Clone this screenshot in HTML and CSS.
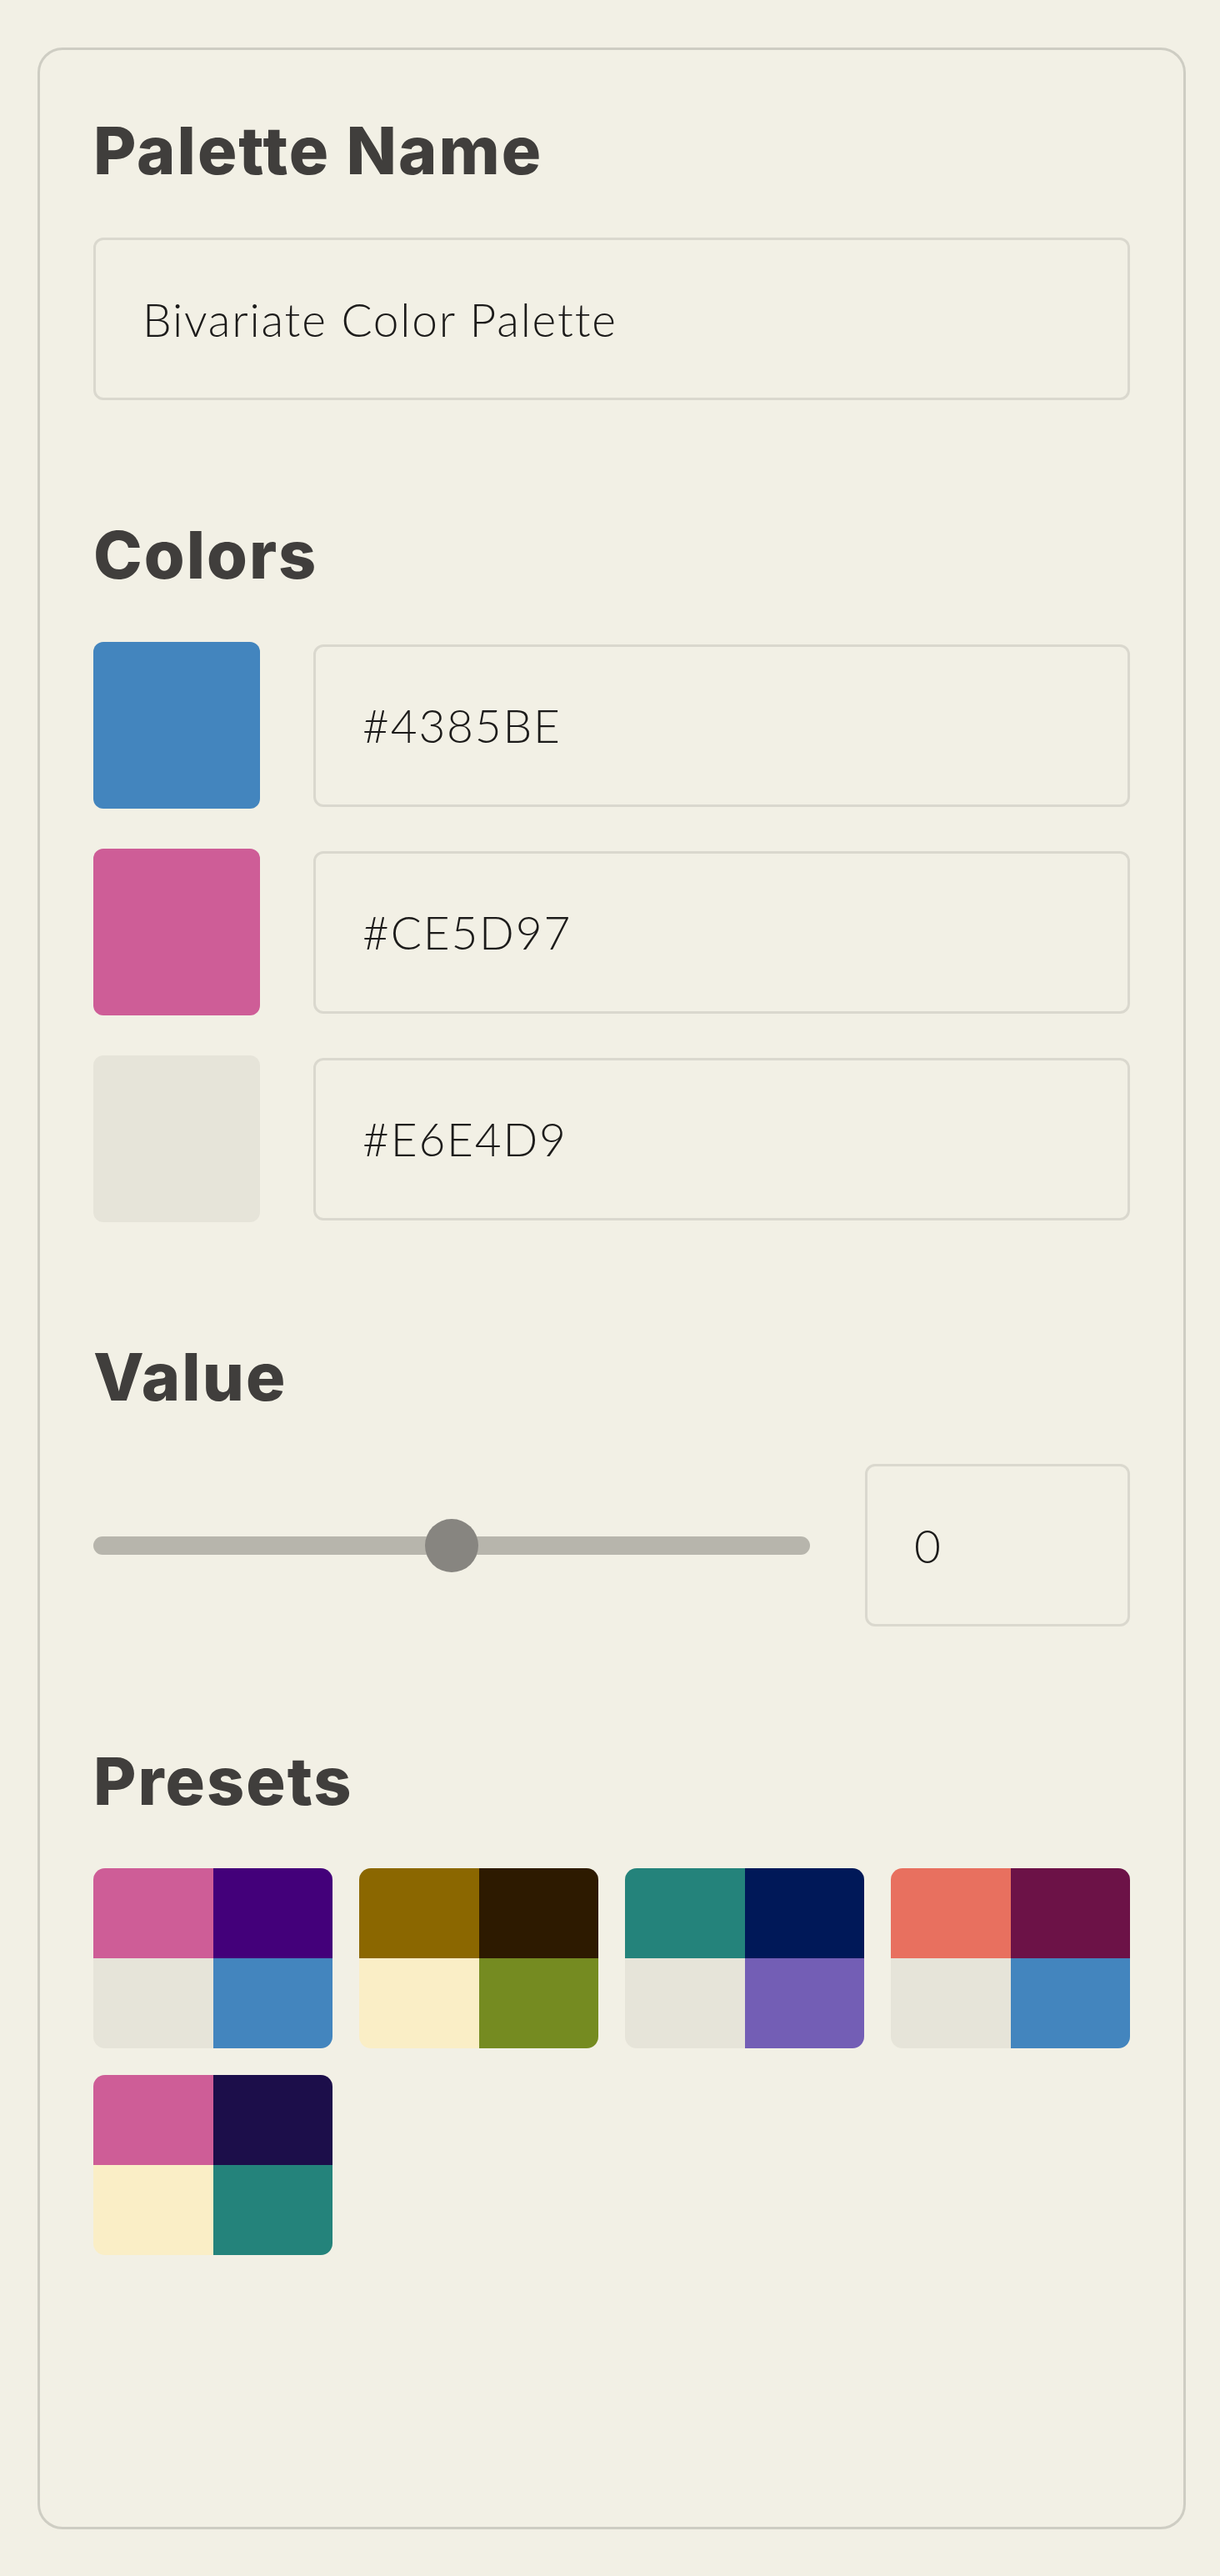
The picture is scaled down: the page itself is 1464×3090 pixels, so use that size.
FILE: index.html
```html
<!DOCTYPE html>
<html lang="en">
<head>
    <meta charset="UTF-8">
    <meta name="viewport" content="width=device-width, initial-scale=1.0">
    <title>Bivariate Color Palette</title>
    <link rel="stylesheet" href="styles.css">
</head>
<body>
    <div class="panel">
        <section class="section">
            <h2>Palette Name</h2>
            <input class="field" type="text" value="Bivariate Color Palette">
        </section>

        <section class="section">
            <h2>Colors</h2>
            <div class="color-list">
                <div class="color-row">
                    <div class="swatch swatch-blue"></div>
                    <input class="field" type="text" value="#4385BE">
                </div>
                <div class="color-row">
                    <div class="swatch swatch-magenta"></div>
                    <input class="field" type="text" value="#CE5D97">
                </div>
                <div class="color-row">
                    <div class="swatch swatch-base"></div>
                    <input class="field" type="text" value="#E6E4D9">
                </div>
            </div>
        </section>

        <section class="section">
            <h2>Value</h2>
            <div class="value-row">
                <input class="slider" type="range" min="-1" max="1" step="0.01" value="0">
                <input class="field field-number" type="number" value="0">
            </div>
        </section>

        <section class="section">
            <h2>Presets</h2>
            <div class="presets">
                <div class="preset">
                    <span style="background-color: #CE5D97"></span>
                    <span style="background-color: #43007A"></span>
                    <span style="background-color: #E6E4D9"></span>
                    <span style="background-color: #4385BE"></span>
                </div>
                <div class="preset">
                    <span style="background-color: #8B6700"></span>
                    <span style="background-color: #2D1A00"></span>
                    <span style="background-color: #FAEEC6"></span>
                    <span style="background-color: #758B21"></span>
                </div>
                <div class="preset">
                    <span style="background-color: #24837B"></span>
                    <span style="background-color: #001858"></span>
                    <span style="background-color: #E6E4D9"></span>
                    <span style="background-color: #735EB5"></span>
                </div>
                <div class="preset">
                    <span style="background-color: #E8705F"></span>
                    <span style="background-color: #6C1247"></span>
                    <span style="background-color: #E6E4D9"></span>
                    <span style="background-color: #4385BE"></span>
                </div>
                <div class="preset">
                    <span style="background-color: #CE5D97"></span>
                    <span style="background-color: #1C0E4A"></span>
                    <span style="background-color: #FAEEC6"></span>
                    <span style="background-color: #24837B"></span>
                </div>
            </div>
        </section>
    </div>
</body>
</html>
```

FILE: styles.css
```css
* {
    box-sizing: border-box;
}
body {
    font-family: 'Lato', 'Open Sans', sans-serif;
    margin: 0;
    padding: 57px 41px 56px 45px;
    background-color: #F2F0E5;
    color: #1C1B1A;
}
.panel {
    width: 1378px;
    height: 2977px;
    padding: 81px 64px 0;
    border: 3px solid #CECDC3;
    border-radius: 30px;
}
.section + .section {
    margin-top: 146px;
}
.section h2 {
    font-family: 'Inter', 'Lato', sans-serif;
    font-size: 79px;
    font-weight: 800;
    line-height: 78px;
    letter-spacing: 2px;
    color: #403E3C;
    margin: 0 0 66px;
}
.field {
    display: block;
    width: 100%;
    height: 195px;
    padding: 0 56px;
    font-family: 'Lato', 'Open Sans', sans-serif;
    font-size: 55px;
    font-weight: 300;
    letter-spacing: 1.8px;
    color: #1C1B1A;
    background-color: transparent;
    border: 3px solid #DAD8CE;
    border-radius: 12px;
    outline: none;
}
.color-list {
    display: flex;
    flex-direction: column;
    gap: 48px;
}
.color-row {
    display: flex;
    align-items: center;
    gap: 64px;
}
.swatch {
    flex: 0 0 200px;
    height: 200px;
    border-radius: 12px;
}
.swatch-blue {
    background-color: #4385BE;
}
.swatch-magenta {
    background-color: #CE5D97;
}
.swatch-base {
    background-color: #E6E4D9;
}
.value-row {
    display: grid;
    grid-template-columns: 1fr 318px;
    gap: 66px;
    align-items: center;
}
.slider {
    -webkit-appearance: none;
    appearance: none;
    width: 100%;
    height: 64px;
    margin: 0;
    background: transparent;
}
.slider::-webkit-slider-runnable-track {
    height: 22px;
    border-radius: 11px;
    background-color: #B7B5AC;
}
.slider::-webkit-slider-thumb {
    -webkit-appearance: none;
    width: 64px;
    height: 64px;
    margin-top: -21px;
    border-radius: 50%;
    background-color: #878580;
    border: none;
}
.field-number {
    -moz-appearance: textfield;
}
.field-number::-webkit-inner-spin-button,
.field-number::-webkit-outer-spin-button {
    -webkit-appearance: none;
    margin: 0;
}
.presets {
    display: grid;
    grid-template-columns: repeat(4, 1fr);
    gap: 32px;
}
.preset {
    display: grid;
    grid-template-columns: 1fr 1fr;
    grid-template-rows: 1fr 1fr;
    height: 216px;
    border-radius: 14px;
    overflow: hidden;
    cursor: pointer;
}
```
